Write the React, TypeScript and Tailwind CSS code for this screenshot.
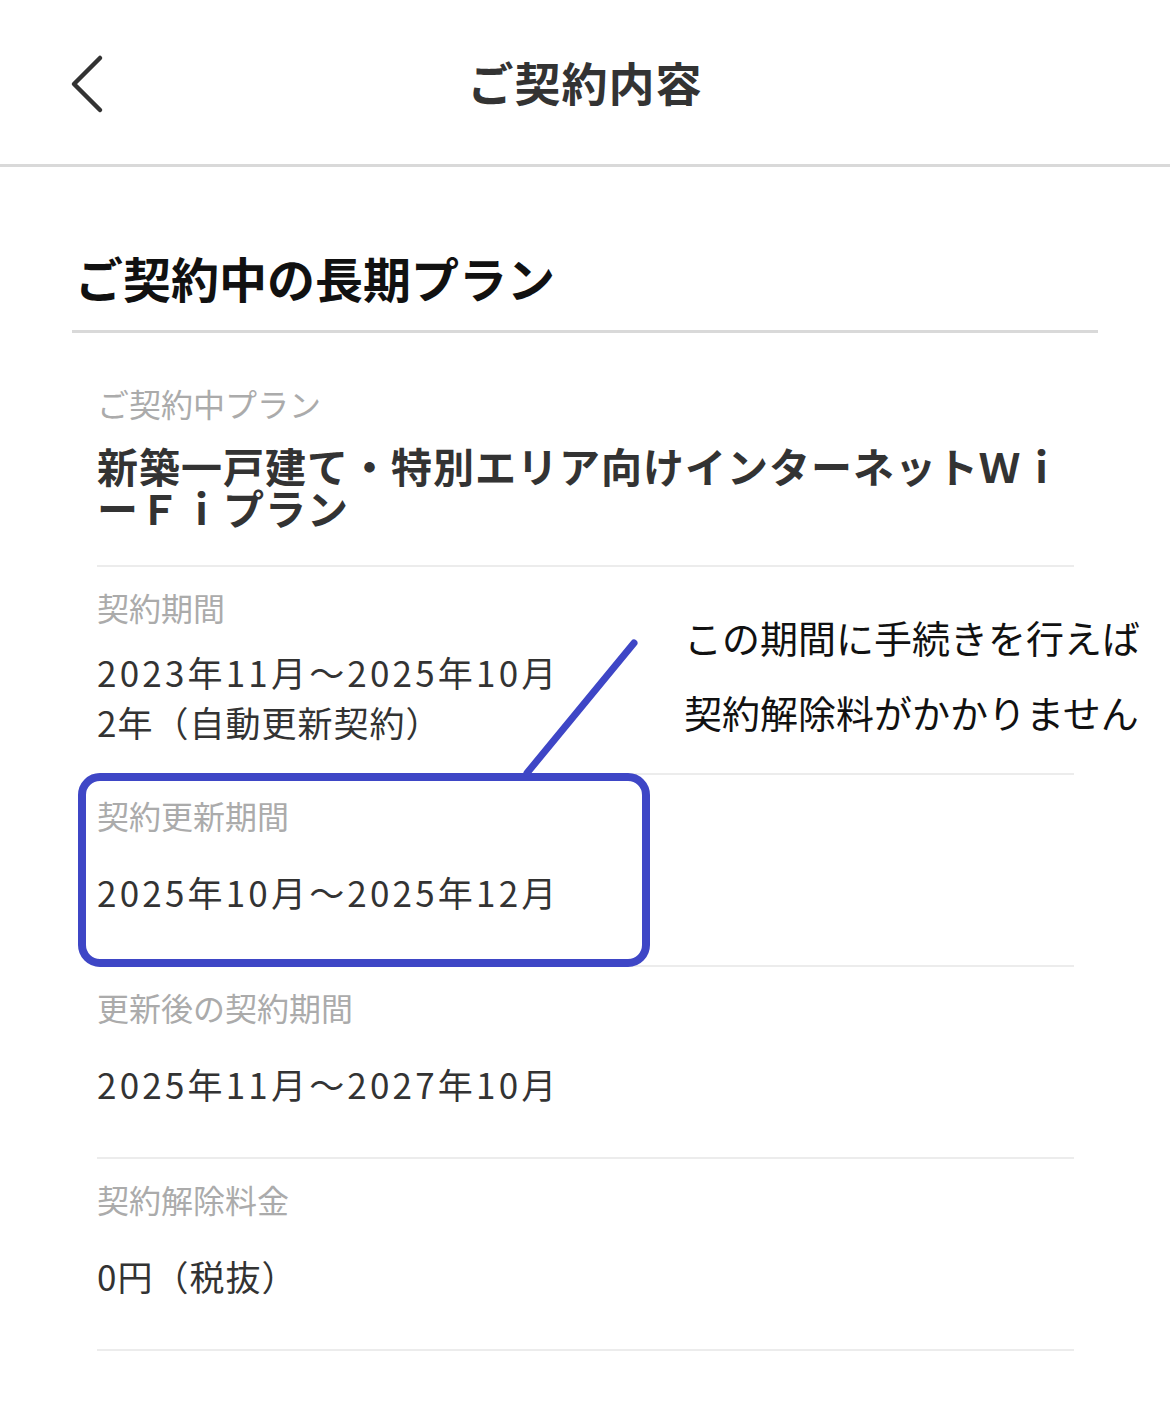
import React from 'react';

const font = { fontFamily: '"Noto Sans CJK JP", "Noto Sans", sans-serif' };

const Label: React.FC<{ children: React.ReactNode }> = ({ children }) => (
    <div className="text-[32px] leading-[32px] text-[#ababab]">{children}</div>
);

const App: React.FC = () => {
    return (
        <div className="min-h-[1407px] bg-white text-[#333]" style={font}>
            {/* Header */}
            <header className="relative h-[167px] border-b-[3px] border-[#d9d9d9] flex items-center justify-center">
                <button className="absolute left-[68px] top-[54px] w-[40px] h-[60px] flex items-center justify-center">
                    <svg width="40" height="60" viewBox="0 0 40 60" fill="none">
                        <polyline points="32,4 6,30 32,56" stroke="#333" strokeWidth="4.5" strokeLinecap="round" strokeLinejoin="round" />
                    </svg>
                </button>
                <h1 className="text-[46px] leading-[46px] font-bold tracking-[1px] -mt-[2px]">ご契約内容</h1>
            </header>

            {/* Section */}
            <section className="pt-[86px]">
                <h2 className="mx-[72px] w-[1026px] pl-[3px] pb-[29px] border-b-[3px] border-[#d9d9d9] text-[48px] leading-[48px] font-bold text-[#111]">
                    ご契約中の長期プラン
                </h2>

                <div className="ml-[97px] w-[977px]">
                    {/* Current plan */}
                    <div className="pt-[54px] pb-[37px] border-b-2 border-[#ececec]">
                        <Label>ご契約中プラン</Label>
                        <div className="mt-[25px] text-[41px] leading-[42px] font-bold tracking-[1px] text-[#333]">
                            新築一戸建て・特別エリア向けインターネットＷｉ<br />ーＦｉプラン
                        </div>
                    </div>

                    {/* Contract period */}
                    <div className="relative pt-[24px] pb-[26px] border-b-2 border-[#ececec]">
                        <Label>契約期間</Label>
                        <div className="mt-[24px] text-[35px] leading-[50px] tracking-[3.2px]">
                            <div>2023年11月～2025年10月</div>
                            <div className="tracking-[1px]">2年（自動更新契約）</div>
                        </div>
                        <div className="absolute left-[587px] top-[32px] text-[38px] leading-[75px] text-[#111] whitespace-nowrap">
                            <div>この期間に手続きを行えば</div>
                            <div>契約解除料がかかりません</div>
                        </div>
                    </div>

                    {/* Renewal period */}
                    <div className="relative pt-[24px] pb-[48px] border-b-2 border-[#ececec]">
                        <Label>契約更新期間</Label>
                        <div className="mt-[36px] text-[35px] leading-[50px] tracking-[3.2px]">2025年10月～2025年12月</div>
                        <div className="absolute -left-[19px] -top-[2px] w-[572px] h-[194px] border-[8px] border-[#3e46c6] rounded-[22px] pointer-events-none" />
                        <svg className="absolute left-[425px] -top-[137px] pointer-events-none" width="120" height="140" viewBox="0 0 120 140" fill="none">
                            <line x1="112" y1="5" x2="5" y2="135" stroke="#3e46c6" strokeWidth="7" strokeLinecap="round" />
                        </svg>
                    </div>

                    {/* After renewal */}
                    <div className="pt-[24px] pb-[48px] border-b-2 border-[#ececec]">
                        <Label>更新後の契約期間</Label>
                        <div className="mt-[36px] text-[35px] leading-[50px] tracking-[3.2px]">2025年11月～2027年10月</div>
                    </div>

                    {/* Cancellation fee */}
                    <div className="pt-[24px] pb-[48px] border-b-2 border-[#ececec]">
                        <Label>契約解除料金</Label>
                        <div className="mt-[36px] text-[35px] leading-[50px] tracking-[1px]">0円（税抜）</div>
                    </div>
                </div>
            </section>
        </div>
    );
};

export default App;
